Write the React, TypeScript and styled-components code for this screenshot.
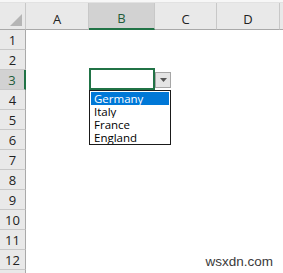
import React from 'react';
import styled, { createGlobalStyle } from 'styled-components';

const GlobalStyle = createGlobalStyle`
  html, body {
    margin: 0;
    padding: 0;
    background: #ffffff;
    overflow: hidden;
  }
`;

const Page = styled.div`
  width: 283px;
  height: 273px;
  position: relative;
  overflow: hidden;
  background: #ffffff;
  font-family: 'Open Sans', 'Liberation Sans', Arial, sans-serif;
`;

const TopStrip = styled.div`
  height: 3px;
  background: #f7f7f7;
  border-bottom: 1px solid #e2e2e2;
  box-sizing: border-box;
`;

const Sheet = styled.div`
  display: grid;
  grid-template-columns: 26px 63px 66px 62px 63px 10px;
  grid-template-rows: 27px repeat(13, 20px);
`;

const HeaderCell = styled.div<{ $selected?: boolean }>`
  box-sizing: border-box;
  display: flex;
  align-items: center;
  justify-content: center;
  background: ${(p) => (p.$selected ? '#d2d2d2' : '#e9e9e9')};
  border-right: 1px solid #c8c8c8;
  border-bottom: ${(p) => (p.$selected ? '2px solid #217346' : '1px solid #a9a9a9')};
  color: ${(p) => (p.$selected ? '#1e5c3a' : '#222222')};
  font-size: 13px;
  padding-top: 5px;
`;

const Corner = styled.div`
  box-sizing: border-box;
  position: relative;
  background: #e9e9e9;
  border-right: 1px solid #c8c8c8;
  border-bottom: 1px solid #a9a9a9;
`;

const CornerMark = styled.svg`
  position: absolute;
  right: 3px;
  bottom: 3px;
`;

const RowHeader = styled.div<{ $selected?: boolean }>`
  box-sizing: border-box;
  display: flex;
  align-items: center;
  justify-content: center;
  background: ${(p) => (p.$selected ? '#d2d2d2' : '#e9e9e9')};
  border-bottom: 1px solid #c8c8c8;
  border-right: ${(p) => (p.$selected ? '2px solid #217346' : '1px solid #a9a9a9')};
  color: ${(p) => (p.$selected ? '#1e5c3a' : '#222222')};
  font-size: 13px;
  padding-top: 1px;
`;

const Cell = styled.div`
  background: #ffffff;
  position: relative;
`;

const ActiveCell = styled.div`
  position: absolute;
  left: 0;
  top: -2px;
  width: 66px;
  height: 22px;
  box-sizing: border-box;
  border: 2px solid #217346;
  z-index: 2;
`;

const DropButton = styled.div`
  position: absolute;
  left: 66px;
  top: 2px;
  width: 16px;
  height: 16px;
  box-sizing: border-box;
  background: #e4e4e4;
  border: 1px solid #a6a6a6;
  display: flex;
  align-items: center;
  justify-content: center;
  z-index: 3;
`;

const List = styled.div`
  position: absolute;
  left: 0;
  top: 20px;
  width: 82px;
  box-sizing: border-box;
  border: 1px solid #1a1a1a;
  background: #ffffff;
  padding: 1px 1px 0;
  display: flex;
  flex-direction: column;
  z-index: 4;
`;

const Item = styled.div<{ $active?: boolean }>`
  height: 13px;
  line-height: 13px;
  font-size: 11.5px;
  padding-left: 3px;
  overflow: hidden;
  color: ${(p) => (p.$active ? '#ffffff' : '#000000')};
  background: ${(p) => (p.$active ? '#0078d7' : 'transparent')};
  white-space: nowrap;
`;

const Watermark = styled.div`
  position: absolute;
  right: 10px;
  bottom: 4px;
  font-family: 'Liberation Sans', Arial, sans-serif;
  font-size: 13.5px;
  color: #3a3a3a;
`;

const columns = ['A', 'B', 'C', 'D', ''];
const rows = Array.from({ length: 13 }, (_, i) => i + 1);
const countries = ['Germany', 'Italy', 'France', 'England'];

export default function App() {
  return (
    <Page>
      <GlobalStyle />
      <TopStrip />
      <Sheet>
        <Corner>
          <CornerMark width="12" height="12" viewBox="0 0 12 12">
            <polygon points="12,0 12,12 0,12" fill="#b5b5b5" />
          </CornerMark>
        </Corner>
        {columns.map((c, i) => (
          <HeaderCell key={i} $selected={c === 'B'}>
            {c}
          </HeaderCell>
        ))}
        {rows.map((r) => (
          <React.Fragment key={r}>
            <RowHeader $selected={r === 3}>{r < 13 ? r : ''}</RowHeader>
            {columns.map((c, i) => (
              <Cell key={i}>
                {r === 3 && c === 'B' && (
                  <>
                    <ActiveCell />
                    <DropButton>
                      <svg width="7" height="4" viewBox="0 0 7 4">
                        <polygon points="0,0 7,0 3.5,4" fill="#555555" />
                      </svg>
                    </DropButton>
                    <List>
                      {countries.map((name, j) => (
                        <Item key={name} $active={j === 0}>
                          {name}
                        </Item>
                      ))}
                    </List>
                  </>
                )}
              </Cell>
            ))}
          </React.Fragment>
        ))}
      </Sheet>
      <Watermark>wsxdn.com</Watermark>
    </Page>
  );
}
